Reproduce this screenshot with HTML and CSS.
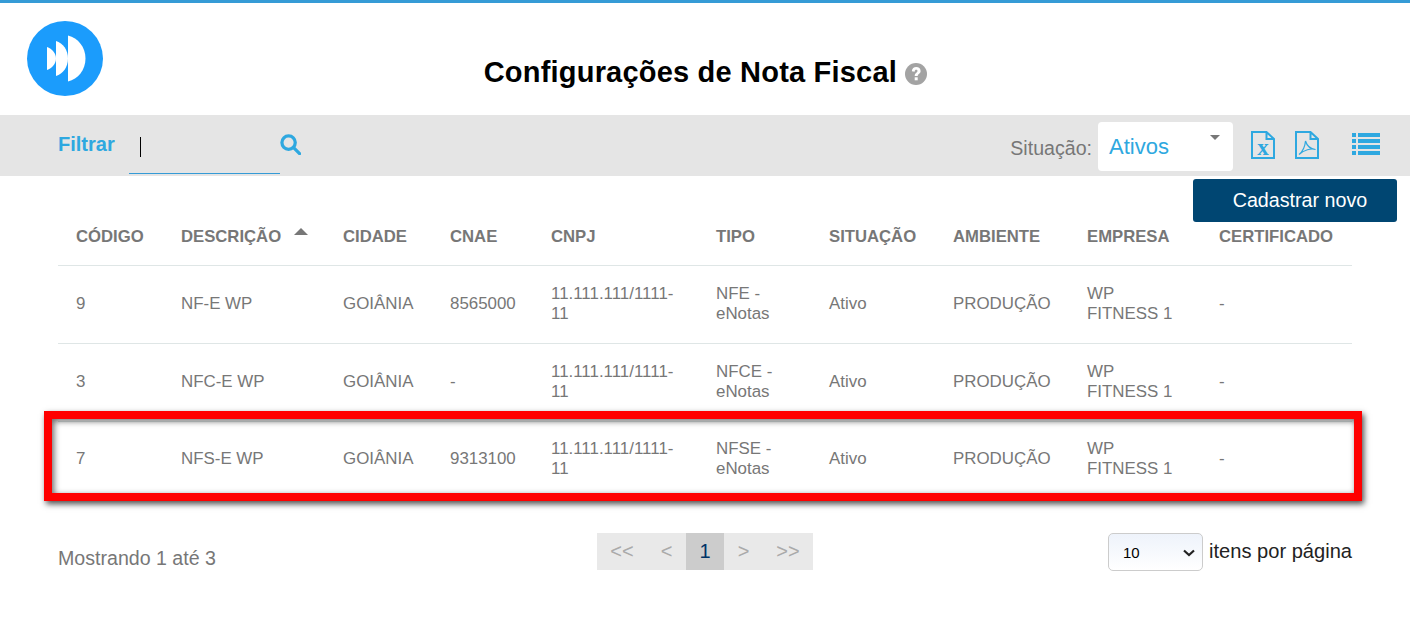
FILE: index.html
```html
<!DOCTYPE html>
<html lang="en">
<head>
    <meta charset="UTF-8">
    <meta name="viewport" content="width=device-width, initial-scale=1.0">
    <title>Configurações de Nota Fiscal</title>
    <link rel="stylesheet" href="styles.css">
</head>
<body>
    <header class="top">
        <svg class="logo" width="76" height="75" viewBox="0 0 76 75">
            <ellipse cx="38" cy="37.500" rx="38" ry="37.500" fill="#1b9cfc"/>
            <path d="M20 26 C25 28 29 32 29 37.500 C29 43 25 47 20 49 Z" fill="#fff"/>
            <path d="M29 20 C36 22 41 29 41 37.500 C41 46 36 53 29 55 Z" fill="#fff"/>
            <path d="M41 14.500 C51 17 58.500 26 58.500 37.500 C58.500 49 51 58 41 60.500 Z" fill="#fff"/>
        </svg>
        <h1 class="title">Configurações de Nota Fiscal
            <svg class="help" width="22" height="22" viewBox="0 0 22 22">
                <circle cx="11" cy="11" r="11" fill="#a3a3a3"/>
                <path d="M6.800 8.200 C7 5.500 8.800 4 11.200 4 C13.800 4 15.600 5.700 15.600 7.900 C15.600 10.700 12.700 11 12.700 13 H9.700 C9.700 9.800 12.500 9.700 12.500 8 C12.500 7.200 12 6.800 11.200 6.800 C10.300 6.800 9.800 7.400 9.600 8.700 Z" fill="#fff"/>
                <rect x="9.700" y="14.300" width="3" height="3" fill="#fff"/>
            </svg>
        </h1>
    </header>

    <section class="filter-bar">
        <div class="filter-left">
            <span class="filter-label">Filtrar</span>
            <div class="filter-input"><span class="caret"></span></div>
            <svg class="search" width="21" height="21" viewBox="0 0 22 22" fill="none" stroke="#2ea8e0" stroke-width="3.400">
                <circle cx="9" cy="9" r="7"/>
                <path d="M14 14 L20.500 20.500" stroke-linecap="round"/>
            </svg>
        </div>
        <div class="filter-right">
            <span class="status-label">Situação:</span>
            <div class="status-select">Ativos<span class="status-arrow"></span></div>
            <svg class="file-icon" width="24" height="28" viewBox="0 0 24 28" fill="none" stroke="#2ea8e0" stroke-width="2">
                <path d="M1 1 H15.500 L23 8 V27 H1 Z M15.500 1 V8 H23"/>
                <text x="12" y="24" class="file-x">x</text>
            </svg>
            <svg class="file-icon pdf" width="24" height="28" viewBox="0 0 24 28" fill="none" stroke="#2ea8e0" stroke-width="2">
                <path d="M1 1 H15.500 L23 8 V27 H1 Z M15.500 1 V8 H23"/>
                <path d="M4 23.500 C7 21 10 16 10.500 10 C12 15 15 18 20.500 18.500 C16 17 9 19 4 23.500 Z" stroke-width="1.200"/>
            </svg>
            <svg class="list-icon" width="28" height="22" viewBox="0 0 28 22" fill="#2ea8e0">
                <rect x="0" y="0" width="4" height="4"/><rect x="6" y="0" width="22" height="4"/>
                <rect x="0" y="6" width="4" height="4"/><rect x="6" y="6" width="22" height="4"/>
                <rect x="0" y="12" width="4" height="4"/><rect x="6" y="12" width="22" height="4"/>
                <rect x="0" y="18" width="4" height="4"/><rect x="6" y="18" width="22" height="4"/>
            </svg>
        </div>
    </section>

    <div class="actions">
        <button class="new-button">Cadastrar novo</button>
    </div>

    <main class="content">
        <table class="grid">
            <colgroup>
                <col class="c1"><col class="c2"><col class="c3"><col class="c4"><col class="c5">
                <col class="c6"><col class="c7"><col class="c8"><col class="c9"><col class="c10">
            </colgroup>
            <thead>
                <tr>
                    <th>CÓDIGO</th>
                    <th>DESCRIÇÃO<span class="sort"></span></th>
                    <th>CIDADE</th>
                    <th>CNAE</th>
                    <th>CNPJ</th>
                    <th>TIPO</th>
                    <th>SITUAÇÃO</th>
                    <th>AMBIENTE</th>
                    <th>EMPRESA</th>
                    <th>CERTIFICADO</th>
                </tr>
            </thead>
            <tbody>
                <tr>
                    <td>9</td><td>NF-E WP</td><td>GOIÂNIA</td><td>8565000</td><td>11.111.111/1111-11</td>
                    <td>NFE - eNotas</td><td>Ativo</td><td>PRODUÇÃO</td><td>WP FITNESS 1</td><td>-</td>
                </tr>
                <tr>
                    <td>3</td><td>NFC-E WP</td><td>GOIÂNIA</td><td>-</td><td>11.111.111/1111-11</td>
                    <td>NFCE - eNotas</td><td>Ativo</td><td>PRODUÇÃO</td><td>WP FITNESS 1</td><td>-</td>
                </tr>
                <tr>
                    <td>7</td><td>NFS-E WP</td><td>GOIÂNIA</td><td>9313100</td><td>11.111.111/1111-11</td>
                    <td>NFSE - eNotas</td><td>Ativo</td><td>PRODUÇÃO</td><td>WP FITNESS 1</td><td>-</td>
                </tr>
            </tbody>
        </table>

        <div class="table-footer">
            <span class="showing">Mostrando 1 até 3</span>
            <nav class="pager">
                <span class="page">&lt;&lt;</span>
                <span class="page">&lt;</span>
                <span class="page active">1</span>
                <span class="page">&gt;</span>
                <span class="page">&gt;&gt;</span>
            </nav>
            <div class="per-page">
                <div class="select-wrap">
                    <select class="per-page-select"><option>10</option></select>
                    <svg class="chevron" width="12" height="8" viewBox="0 0 12 8" fill="none" stroke="#222" stroke-width="2.200">
                        <path d="M1 1.500 L6 6 L11 1.500"/>
                    </svg>
                </div>
                <span>itens por página</span>
            </div>
        </div>
    </main>

    <div class="highlight"></div>
</body>
</html>
```

FILE: styles.css
```css
body {
    margin: 0;
    font-family: "Liberation Sans", Arial, sans-serif;
    background: #fff;
    color: #777;
    border-top: 3px solid #359bd6;
}
.top {
    position: relative;
    height: 112px;
    display: flex;
    justify-content: center;
}
.logo {
    position: absolute;
    left: 27px;
    top: 18px;
}
.title {
    margin: 53px 0 0 1px;
    font-size: 29px;
    line-height: 32px;
    font-weight: 700;
    color: #000;
    letter-spacing: 0.2px;
}
.help {
    vertical-align: -3px;
}
.filter-bar {
    height: 61px;
    background: #e5e5e5;
    display: flex;
    justify-content: space-between;
    padding: 0 30px 0 58px;
}
.filter-left {
    display: flex;
    align-items: flex-start;
}
.filter-label {
    margin: 18px 14px 0 0;
    font-size: 20px;
    line-height: 23px;
    font-weight: 700;
    color: #2ea8e0;
}
.filter-input {
    width: 151px;
    height: 59px;
    border-bottom: 1px solid #359bd6;
    padding: 22px 0 0 11px;
    box-sizing: border-box;
}
.caret {
    display: block;
    width: 1px;
    height: 20px;
    background: #000;
}
.search {
    margin-top: 19px;
}
.filter-right {
    display: flex;
    align-items: flex-start;
}
.status-label {
    margin: 22px 6px 0 0;
    font-size: 19.6px;
    line-height: 23px;
    color: #777;
}
.status-select {
    position: relative;
    width: 135px;
    height: 49px;
    margin-top: 7px;
    padding: 12px 0 0 11px;
    box-sizing: border-box;
    background: #fff;
    border-radius: 4px;
    font-size: 22px;
    line-height: 26px;
    color: #2ea8e0;
}
.status-arrow {
    position: absolute;
    top: 13px;
    right: 13px;
    border-left: 5px solid transparent;
    border-right: 5px solid transparent;
    border-top: 5px solid #777;
}
.file-icon {
    margin: 16px 0 0 18px;
}
.file-icon.pdf {
    margin-left: 20px;
}
.file-x {
    font-family: "Liberation Serif", serif;
    font-size: 23px;
    font-weight: 700;
    fill: #2ea8e0;
    stroke: none;
    text-anchor: middle;
}
.list-icon {
    margin: 18px 0 0 33px;
}
.actions {
    display: flex;
    justify-content: flex-end;
    padding: 3px 13px 0 0;
}
.new-button {
    width: 204px;
    height: 43px;
    padding: 0 0 0 10px;
    border: none;
    border-radius: 3px;
    background: #004672;
    color: #fff;
    font-family: inherit;
    font-size: 19.7px;
}
.content {
    padding: 0 58px;
}
.grid {
    width: 1294px;
    table-layout: fixed;
    border-collapse: collapse;
}
.c1 { width: 105px; }
.c2 { width: 162px; }
.c3 { width: 107px; }
.c4 { width: 101px; }
.c5 { width: 165px; }
.c6 { width: 113px; }
.c7 { width: 124px; }
.c8 { width: 134px; }
.c9 { width: 132px; }
.c10 { width: 151px; }
.grid th {
    height: 43px;
    padding: 0 18px 13px;
    box-sizing: border-box;
    border-bottom: 1px solid #dfe6e6;
    text-align: left;
    font-size: 16.7px;
    font-weight: 700;
    color: #777;
    white-space: nowrap;
}
.sort {
    display: inline-block;
    margin-left: 13px;
    vertical-align: 7px;
    border-left: 7px solid transparent;
    border-right: 7px solid transparent;
    border-bottom: 7px solid #777;
}
.grid td {
    height: 78px;
    padding: 0 18px;
    box-sizing: border-box;
    border-bottom: 1px solid #dfe6e6;
    font-size: 16.9px;
    line-height: 20px;
    color: #777;
}
.grid tbody tr:last-child td {
    height: 76px;
    border-bottom: none;
}
.table-footer {
    display: flex;
    justify-content: space-between;
    align-items: flex-start;
    margin-top: 36px;
}
.showing {
    margin-top: 14px;
    width: 300px;
    font-size: 19.6px;
    line-height: 23px;
}
.pager {
    display: flex;
    height: 37px;
    margin-left: 239px;
    background: #e9e9e9;
    color: #aaa;
    font-size: 20px;
    line-height: 37px;
}
.page {
    width: 39px;
    text-align: center;
    white-space: nowrap;
}
.page:first-child,
.page:last-child {
    width: 50px;
}
.page.active {
    width: 38px;
    background: #ccc;
    color: #003366;
}
.per-page {
    display: flex;
    align-items: flex-start;
    margin-left: auto;
    color: #222;
    font-size: 20.1px;
    line-height: 36px;
}
.select-wrap {
    position: relative;
    height: 38px;
    margin-right: 6px;
}
.chevron {
    position: absolute;
    top: 16px;
    right: 8px;
    pointer-events: none;
}
.per-page-select {
    display: block;
    width: 95px;
    height: 38px;
    margin: 0;
    padding-left: 14px;
    border: 1px solid #ccc;
    border-radius: 5px;
    background: linear-gradient(#eef3fb, #fff);
    appearance: none;
    font-family: inherit;
    font-size: 15px;
    color: #000;
}
.highlight {
    position: absolute;
    left: 44px;
    top: 411px;
    width: 1302px;
    height: 74px;
    border: 8px solid #f00;
    box-shadow: 2px 3px 6px rgba(0, 0, 0, 0.7), inset 2px 2px 6px rgba(0, 0, 0, 0.6);
}
```
